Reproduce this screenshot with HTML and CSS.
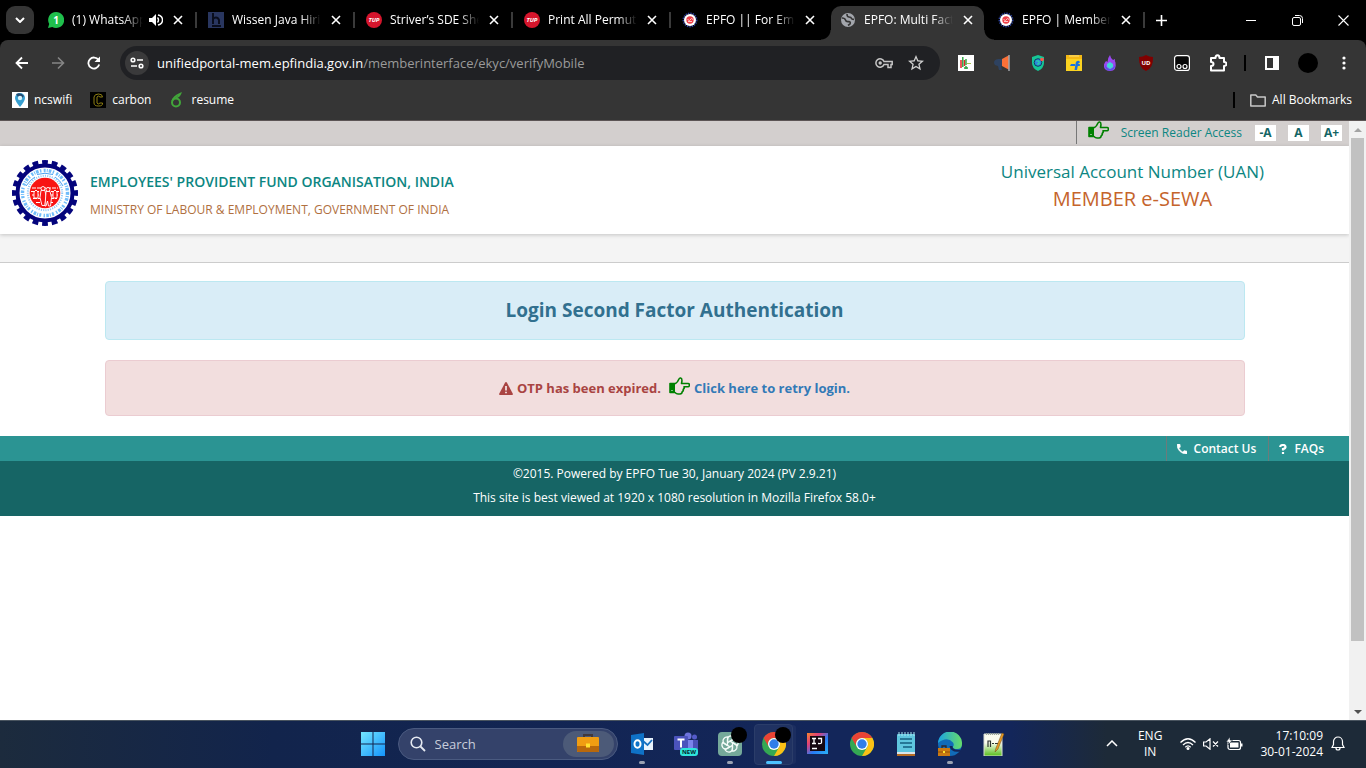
FILE: index.html
```html
<!DOCTYPE html>
<html lang="en">
<head>
<meta charset="utf-8">
<title>EPFO: Multi Factor Authentication</title>
<meta name="viewport" content="width=device-width, initial-scale=1">
<link rel="stylesheet" href="styles.css">
</head>
<body>
<svg class="defs" aria-hidden="true">
  <symbol id="x" viewBox="0 0 10 10"><path d="M1 1l8 8M9 1L1 9" fill="none" stroke="currentColor" stroke-width="1.6"/></symbol>
  <symbol id="epfo" viewBox="0 0 66 66">
    <circle cx="33" cy="33" r="30.5" fill="none" stroke="#04047c" stroke-width="5" pathLength="200" stroke-dasharray="6 4" stroke-dashoffset="3" transform="rotate(-90 33 33)"/>
    <circle cx="33" cy="33" r="27.5" fill="#fff" stroke="#04047c" stroke-width="4"/>
    <circle cx="33" cy="33" r="22.5" fill="none" stroke="#6fbcfa" stroke-width="3.4" stroke-dasharray="2 1.2 1 1 2.6 1.4 1.4 2.4"/>
    <path d="M14 26q5-7 9-9M43 17q5 3 8 9M25 14.500q8-2.500 16 0" fill="none" stroke="#4aa2f2" stroke-width="1"/>
    <circle cx="33" cy="33" r="17.200" fill="none" stroke="#8fc8f8" stroke-width="2" stroke-dasharray="1.100 1.200"/>
    <circle cx="33" cy="33" r="15.300" fill="#f81414"/>
    <path d="M20 28h26M19 31.500h8M39 31.500h8M20 35h7M39 35h7M21 38.500h7M38 38.500h7M24 42.500h5M37 42.500h5" fill="none" stroke="#fff" stroke-width="1.100" stroke-dasharray="4 1"/>
    <g fill="#f81414" stroke="#fff" stroke-width=".9">
      <path d="M29 30.500h4l1 6-1 9h-3l-2-8z"/>
      <path d="M34 31.500h4l1.500 6-1 8.500h-2l-1-5-1.500 5h-1z"/>
      <circle cx="31" cy="28.500" r="2"/><circle cx="36" cy="29.500" r="2"/>
      <path d="M22 32l2-2 2 2v6h-4zM41 32l2-2 2 2v6h-4z"/>
    </g>
  </symbol>
  <symbol id="epfo-small" viewBox="0 0 16 16">
    <circle cx="8" cy="8" r="6.6" fill="none" stroke="#2c419b" stroke-width="1.8" stroke-dasharray="1.4 1"/>
    <circle cx="8" cy="8" r="6" fill="#fff"/><circle cx="8" cy="8" r="3.7" fill="#ef4048"/>
    <path d="M5.5 7.5l2 1 2-2 1.5 1M6 9.5h4" stroke="#ffc4c4" fill="none"/>
  </symbol>
  <symbol id="hand" viewBox="0 0 21 18">
    <path d="M1 6.5h5v9H1z" fill="#008000"/>
    <path d="M1 6.5h5.500q2-1 3.200-4 .8-1.800 2-1.500 2 .5.8 5.500h6.500q1.600.2 1.500 1.700-.2 1.500-1.500 1.600H15q.8 1.300-.8 2.500.5 1.700-1 2.400 0 2-2.200 2.300H9q-1.600-.1-3-1.500H1z" fill="none" stroke="#008000" stroke-width="1.600" stroke-linejoin="round"/>
    <path d="M2.500 13.500h1" stroke="#fff" stroke-width="1"/>
  </symbol>
  <symbol id="chrome" viewBox="0 0 24 24">
    <circle cx="12" cy="12" r="12" fill="#34a853"/>
    <path d="M1.600 6A12 12 0 0 1 22.400 6H12a6 6 0 0 0-5.200 9z" fill="#ea4335"/>
    <path d="M22.400 6A12 12 0 0 1 12 24l5.200-9A6 6 0 0 0 17 8.700L12 6z" fill="#fbc116"/>
    <circle cx="12" cy="12" r="6" fill="#fff"/><circle cx="12" cy="12" r="4.700" fill="#2f7de9"/>
  </symbol>
</svg>

<header class="browser">
  <div class="tabs">
    <button class="tab-search" aria-label="Search tabs"><svg width="10" height="6" viewBox="0 0 10 6"><path d="M1 1l4 4 4-4" fill="none" stroke="#fff" stroke-width="2"/></svg></button>
    <div class="tab">
      <svg class="fav" viewBox="0 0 16 16"><path d="M8 0a8 8 0 1 1-3.700 15L0 16l1.200-4A8 8 0 0 1 8 0z" fill="#1fbf4c"/><text x="8" y="11.500" font-size="10" font-weight="700" text-anchor="middle" fill="#fff">1</text></svg>
      <button class="title">(1) WhatsApp</button>
      <svg class="sound" viewBox="0 0 14 12"><path d="M0 4h3l4-4v12L3 8H0z" fill="#fff"/><path d="M8.500 3.500q2 2.500 0 5M9 1q4.500 1 4.500 5T9 11" fill="none" stroke="#fff" stroke-width="1.400"/></svg>
      <button class="close" aria-label="Close tab"><svg><use href="#x"/></svg></button>
    </div>
    <div class="tab">
      <svg class="fav" viewBox="0 0 16 16"><path fill="#29365f" d="M0 0h16v16H0z"/><path d="M5 1v11M5 7q1-1.500 3-1.500T11 8v4M4 14h9" fill="none" stroke="#090d1c" stroke-width="2"/></svg>
      <button class="title">Wissen Java Hirin</button>
      <button class="close" aria-label="Close tab"><svg><use href="#x"/></svg></button>
    </div>
    <div class="tab">
      <svg class="fav" viewBox="0 0 16 16"><circle cx="8" cy="8" r="8" fill="#d5152c"/><text x="8" y="10.300" font-size="6" font-weight="700" font-style="italic" text-anchor="middle" fill="#fff">TUP</text></svg>
      <button class="title">Striver’s SDE She</button>
      <button class="close" aria-label="Close tab"><svg><use href="#x"/></svg></button>
    </div>
    <div class="tab">
      <svg class="fav" viewBox="0 0 16 16"><circle cx="8" cy="8" r="8" fill="#d5152c"/><text x="8" y="10.300" font-size="6" font-weight="700" font-style="italic" text-anchor="middle" fill="#fff">TUP</text></svg>
      <button class="title">Print All Permuta</button>
      <button class="close" aria-label="Close tab"><svg><use href="#x"/></svg></button>
    </div>
    <div class="tab before-active">
      <svg class="fav"><use href="#epfo-small"/></svg>
      <button class="title">EPFO || For Empl</button>
      <button class="close" aria-label="Close tab"><svg><use href="#x"/></svg></button>
    </div>
    <div class="tab active">
      <svg class="fav" viewBox="0 0 16 16"><circle cx="8" cy="8" r="7" fill="#a3a6ac"/><path d="M2 6q3 0 3.500 2T9 9.500q2 .5 1 2.500l-2 1.500M7 2q0 3 2 3t3 2l2 .5" fill="none" stroke="#353535" stroke-width="1.600"/></svg>
      <button class="title">EPFO: Multi Facto</button>
      <button class="close" aria-label="Close tab"><svg><use href="#x"/></svg></button>
    </div>
    <div class="tab">
      <svg class="fav"><use href="#epfo-small"/></svg>
      <button class="title">EPFO | Member</button>
      <button class="close" aria-label="Close tab"><svg><use href="#x"/></svg></button>
    </div>
    <button class="new-tab" aria-label="New tab"><svg width="11" height="11" viewBox="0 0 11 11"><path d="M5.500 0v11M0 5.500h11" stroke="#fff" stroke-width="1.600"/></svg></button>
    <div class="win">
      <button aria-label="Minimise"><svg width="10" height="10" viewBox="0 0 10 10"><path d="M0 5.500h10" stroke="#fff"/></svg></button>
      <button aria-label="Restore"><svg width="11" height="11" viewBox="0 0 11 11"><path d="M.5 4q0-1.500 1.500-1.500h5q1.500 0 1.500 1.500v5q0 1.500-1.500 1.500H2Q.5 10.500.5 9zM3 .5h4.500q3 0 3 3V8" fill="none" stroke="#fff"/></svg></button>
      <button aria-label="Close"><svg width="11" height="11" viewBox="0 0 11 11"><path d="M.5.5l10 10M10.500.5l-10 10" stroke="#fff" stroke-width="1.100"/></svg></button>
    </div>
  </div>

  <div class="toolbar">
    <button class="cell" aria-label="Back"><svg width="14" height="14" viewBox="0 0 14 14"><path d="M13 7H2M7 1.500L1.500 7 7 12.500" fill="none" stroke="#fff" stroke-width="1.800"/></svg></button>
    <button class="cell" aria-label="Forward"><svg width="14" height="14" viewBox="0 0 14 14"><path d="M1 7h11M7 1.500L12.500 7 7 12.500" fill="none" stroke="#858585" stroke-width="1.600"/></svg></button>
    <button class="cell" aria-label="Reload"><svg width="14" height="14" viewBox="0 0 14 14"><path d="M12.200 8.500A5.500 5.500 0 1 1 11.500 4" fill="none" stroke="#fff" stroke-width="1.800"/><path d="M13 .5V6H7.500z" fill="#fff"/></svg></button>
    <div class="omnibox">
      <button class="site" aria-label="Site information"><svg width="14" height="12" viewBox="0 0 14 12"><g fill="none" stroke="#fff" stroke-width="1.600"><circle cx="3" cy="3" r="1.800"/><path d="M7 3h6M1 9h6"/><circle cx="11" cy="9" r="1.800"/></g></svg></button>
      <a class="url" href="#"><b>unifiedportal-mem.epfindia.gov.in</b>/memberinterface/ekyc/verifyMobile</a>
      <button class="ob" aria-label="Passwords"><svg width="18" height="11" viewBox="0 0 18 11"><path d="M9 3.500h8.200v3H16v3h-3v-3H9a4.200 4.200 0 1 1 0-3z" fill="none" stroke="#c5c5c5" stroke-width="1.500"/><circle cx="5.200" cy="5" r="1.700" fill="#c5c5c5"/></svg></button>
      <button class="ob" aria-label="Bookmark this tab"><svg width="16" height="16" viewBox="2 2 20 20"><path fill="#d0d0d0" d="M22 9.240l-7.190-.62L12 2 9.190 8.630 2 9.240l5.460 4.730L5.820 21 12 17.270 18.180 21l-1.630-7.030zM12 15.400l-3.760 2.270 1-4.280-3.320-2.880 4.380-.38L12 6.100l1.710 4.040 4.380.38-3.320 2.880 1 4.280z"/></svg></button>
    </div>
    <button class="cell" aria-label="Trading"><svg viewBox="0 0 16 16"><path fill="#fff" d="M0 0h16v16H0z"/><path d="M3 5v8M6.500 5v6" stroke="#e32626" stroke-width="1.500"/><path d="M4.800 2v10M8 4v6M6 13h4M8 11v3" stroke="#2aa33c" stroke-width="1.400"/><path d="M9 8.500h4" stroke="#a5c44e"/></svg></button>
    <button class="cell" aria-label="Announcements"><svg viewBox="0 0 16 16"><path d="M8 4L14.500.5v14L8 11z" fill="#fa7038"/><path d="M8 4v7H7l1 4H5l-1-4Q0 10.500 0 7.500T4 4z" fill="#2e4260"/><path d="M15 0v16" stroke="#d8dce4"/></svg></button>
    <button class="cell" aria-label="Shield"><svg viewBox="0 0 16 16"><path d="M8 0l6 2v6q0 5-6 8-6-3-6-8V2z" fill="#16c696"/><circle cx="8" cy="7.500" r="3.800" fill="#2b87dc" stroke="#103f61"/><path d="M6 6h3v3H7" fill="none" stroke="#29e0a0"/><circle cx="12" cy="4.500" r="1.800" fill="#ff544a"/></svg></button>
    <button class="cell" aria-label="Flipkart"><svg viewBox="0 0 16 16"><path fill="#fbd321" d="M0 0h16v16H0z"/><path fill="#f5b915" d="M0 0h16v4H0z"/><path d="M3 1h10" stroke="#fbe079"/><path d="M13.500 6Q10 5 9.500 9l-1 6H11l.8-4h2v-2h-1.600q.2-1.300 1.500-1zM5 9h4v2H4z" fill="#1671e0"/></svg></button>
    <button class="cell" aria-label="Flame"><svg viewBox="0 0 16 16"><path d="M8 0q.5 3 3 5l2-1q-.5 2 .5 3.500Q15 16 8 16 1 16 2 9.500q.5-2 2-3.500l1.500 1Q5.500 3 8 0z" fill="#9a48f0"/><path d="M3 10q5 8 10 0 0 5-5 5.500T3 10z" fill="#5755e8"/><path d="M8 7l3 2v3l-3 2-3-2V9z" fill="#42d7d8"/></svg></button>
    <button class="cell" aria-label="uBlock"><svg viewBox="0 0 16 16"><path d="M8 0q3 2 7 2 .5 11-7 14Q.5 13 1 2q4 0 7-2z" fill="#800000"/><text x="8" y="9.800" font-size="6" font-weight="700" text-anchor="middle" fill="#fff">UD</text></svg></button>
    <button class="cell" aria-label="Tampermonkey"><svg viewBox="0 0 16 16"><rect x=".6" y=".6" width="14.800" height="14.800" rx="2.500" fill="#080808" stroke="#fff" stroke-width="1.200"/><g fill="none" stroke="#fff" stroke-width="1.200"><circle cx="5" cy="11.500" r="2"/><circle cx="11" cy="11.500" r="2"/></g></svg></button>
    <button class="cell" aria-label="Extensions"><svg width="18" height="18" viewBox="0 0 18 18"><path d="M2 4h4.500q0-2.700 2-2.700t2 2.700H15v4q2.500 0 2.500 2T15 12v4.500H2V12q2.500 0 2.500-2T2 8z" fill="none" stroke="#fff" stroke-width="2" stroke-linejoin="round"/></svg></button>
    <span class="divider"></span>
    <button class="cell" aria-label="Side panel"><svg width="14" height="14" viewBox="0 0 14 14"><rect x="1" y="1" width="12" height="12" fill="none" stroke="#fff" stroke-width="2"/><path fill="#fff" d="M8 1h5v12H8z"/></svg></button>
    <button class="cell" aria-label="Profile"><span class="avatar"></span></button>
    <button class="cell" aria-label="Menu"><svg viewBox="0 0 16 16"><g fill="#fff"><circle cx="8" cy="3" r="1.600"/><circle cx="8" cy="8" r="1.600"/><circle cx="8" cy="13" r="1.600"/></g></svg></button>
  </div>

  <nav class="bookmarks" aria-label="Bookmarks">
    <a href="#"><svg viewBox="0 0 16 16"><path fill="#fff" d="M0 0h16v16H0z"/><path d="M8 15Q3 9 3 6a5 5 0 0 1 10 0q0 3-5 9z" fill="#379fd0"/><path d="M4 2q5-2 8 2L8 8z" fill="#244b70"/><circle cx="8" cy="6" r="2.200" fill="#d9f3fb"/></svg>ncswifi</a>
    <a href="#"><svg viewBox="0 0 16 16"><path d="M0 0h16v16H0z"/><path d="M12.500 5q0-3-4-3T4 5v6q0 3 4.500 3t4-3h-2.500q-2 2-3 0V5q1-2 3 0z" fill="none" stroke="#8e7f12"/></svg>carbon</a>
    <a href="#"><svg viewBox="0 0 16 16"><circle cx="7" cy="10.500" r="4" fill="none" stroke="#42a63a" stroke-width="2"/><path d="M3.500 9Q4 4.500 11.500 1.500q-1 3-5 4.500" fill="none" stroke="#42a63a" stroke-width="1.700"/></svg>resume</a>
    <span class="divider push"></span>
    <a class="all" href="#"><svg viewBox="0 0 16 16"><path d="M.8 13V3h5l1.700 2h7.700v9H.8z" fill="none" stroke="#c7c7c7" stroke-width="1.500" stroke-linejoin="round"/></svg>All Bookmarks</a>
  </nav>
</header>

<div class="viewport">
  <main class="page">
    <div class="access">
      <div class="access-in">
        <svg class="hand"><use href="#hand"/></svg>
        <a href="#">Screen Reader Access</a>
        <button>-A</button><button>A</button><button>A+</button>
      </div>
    </div>
    <div class="masthead">
      <svg class="logo" role="img" aria-label="EPFO"><use href="#epfo"/></svg>
      <div class="org">
        <strong>EMPLOYEES' PROVIDENT FUND ORGANISATION, INDIA</strong>
        <span>MINISTRY OF LABOUR &amp; EMPLOYMENT, GOVERNMENT OF INDIA</span>
      </div>
      <div class="sewa">
        <span>Universal Account Number (UAN)</span>
        <strong>MEMBER e-SEWA</strong>
      </div>
    </div>
    <div class="strip"></div>
    <div class="container">
      <h1 class="alert info">Login Second Factor Authentication</h1>
      <p class="alert danger">
        <svg class="warn" viewBox="0 0 14 13"><path d="M7 0q.6 0 1 .7l5.800 11Q14.300 13 13 13H1q-1.300 0-.8-1.300L6 .7Q6.400 0 7 0z" fill="#a94442"/><path d="M7 4v4.500M7 9.700v1.600" stroke="#f2dede" stroke-width="1.800"/></svg>
        <span>OTP has been expired.</span>
        <svg class="hand"><use href="#hand"/></svg>
        <a href="#">Click here to retry login.</a>
      </p>
    </div>
    <footer>
      <div class="links">
        <a href="#"><svg viewBox="3 3 18 18"><path fill="#fff" stroke="#fff" d="M6.620 10.790c1.440 2.830 3.760 5.140 6.590 6.590l2.200-2.200c.27-.27.67-.36 1.020-.24 1.120.37 2.330.57 3.570.57.55 0 1 .45 1 1V20c0 .55-.45 1-1 1-9.390 0-17-7.610-17-17 0-.55.45-1 1-1h3.500c.55 0 1 .45 1 1 0 1.250.2 2.450.57 3.570.11.35.03.74-.25 1.020z"/></svg>Contact Us</a>
        <a href="#"><svg class="q" viewBox="0 0 8 10"><path d="M1 3Q1.500 1 4 1t2.500 2Q6.500 4.500 4 5v1.500M4 8v2" fill="none" stroke="#fff" stroke-width="2.200"/></svg>FAQs</a>
      </div>
      <div class="legal">
        <p>©2015. Powered by EPFO Tue 30, January 2024 (PV 2.9.21)</p>
        <p>This site is best viewed at 1920 x 1080 resolution in Mozilla Firefox 58.0+</p>
      </div>
    </footer>
  </main>
  <div class="scroll">
    <button aria-label="Scroll up"><svg width="8" height="4" viewBox="0 0 8 4"><path d="M0 4l4-4 4 4z" fill="#a3a3a3"/></svg></button>
    <div class="track"><div class="thumb"></div></div>
    <button aria-label="Scroll down"><svg width="8" height="4" viewBox="0 0 8 4"><path d="M0 0l4 4 4-4z" fill="#505050"/></svg></button>
  </div>
</div>

<div class="taskbar">
  <div class="apps">
    <button class="app" aria-label="Start"><svg viewBox="0 0 24 24"><defs><linearGradient id="w" x2="1" y2="1"><stop stop-color="#74e6ff"/><stop offset="1" stop-color="#1494fb"/></linearGradient></defs><path fill="url(#w)" d="M0 0h11.500v11.500H0zM12.500 0H24v11.500H12.500zM0 12.500h11.500V24H0zM12.500 12.500H24V24H12.500z"/></svg></button>
    <label class="search">
      <svg class="lens" viewBox="0 0 16 16"><circle cx="6.500" cy="6.500" r="5.300" fill="none" stroke="#e6eaf2" stroke-width="1.600"/><path d="M10.500 10.500L15 15" stroke="#e6eaf2" stroke-width="1.800"/></svg>
      <input type="search" placeholder="Search" aria-label="Search">
      <span class="highlight"><svg viewBox="0 0 24 19"><path d="M8 3V1h8v2" fill="none" stroke="#40383c" stroke-width="2"/><rect x="1" y="3" width="22" height="15" rx="1" fill="#f09d12"/><path fill="#b8680c" d="M1 12h22v5q0 1-1 1H2q-1 0-1-1z"/><path fill="#ffe12e" d="M10 9.500h4v4h-4z"/></svg></span>
    </label>
    <button class="app run" aria-label="Outlook"><svg viewBox="0 0 24 24"><path d="M12 6h11v12H12z" fill="#e9f3fc"/><path d="M13 9l4.500 4L22 8" fill="none" stroke="#1670c0" stroke-width="1.800"/><path d="M1 3l13-2v22L1 21z" fill="#0f72c7"/><ellipse cx="7.500" cy="12" rx="3" ry="3.800" fill="none" stroke="#fff" stroke-width="2"/></svg></button>
    <button class="app" aria-label="Teams"><svg viewBox="0 0 24 24"><circle cx="14" cy="4" r="3.500" fill="#6d73dd"/><circle cx="20.500" cy="5" r="2.500" fill="#545bc9"/><path d="M16 8h8v10h-8z" fill="#4a50b8"/><path d="M9 8h10v13H9z" fill="#7b83eb"/><rect y="4" width="14" height="14" rx="1" fill="#4b53bc"/><path d="M3.500 7.500h7M7 7.500v8" stroke="#fff" stroke-width="2"/><rect x="6" y="16" width="18" height="8" rx="3" fill="#2fe5dc"/><text x="15" y="22.300" font-size="6" font-weight="700" text-anchor="middle" fill="#06262c">NEW</text></svg></button>
    <button class="app run" aria-label="ChatGPT"><svg viewBox="0 0 24 24"><rect width="24" height="24" rx="4" fill="#75a99a"/><g fill="none" stroke="#f3fbf8" stroke-width="1.300"><path id="petal" d="M9.500 13.500V8q0-3.500 3-4 3-.3 4.500 2.300L12 9.200"/><use href="#petal" transform="rotate(60 12 12)"/><use href="#petal" transform="rotate(120 12 12)"/><use href="#petal" transform="rotate(180 12 12)"/><use href="#petal" transform="rotate(240 12 12)"/><use href="#petal" transform="rotate(300 12 12)"/></g></svg><span class="badge"></span></button>
    <button class="app current" aria-label="Chrome, profile 1"><svg><use href="#chrome"/></svg><span class="badge"></span></button>
    <button class="app" aria-label="IntelliJ IDEA"><svg viewBox="0 0 24 24"><defs><linearGradient id="ij" x2="1" y2="1"><stop stop-color="#f8862d"/><stop offset=".3" stop-color="#e03f78"/><stop offset=".6" stop-color="#277bf5"/><stop offset="1" stop-color="#2bb3f5"/></linearGradient></defs><path fill="url(#ij)" d="M1 1h21v21H1z"/><path fill="#150810" d="M4 4h15v15H4z"/><path d="M6 6.500h4M8 6.500v5M6 11.500h4M12 6.500h3.500v4q0 1.500-3.500 1M6 16.500h5" fill="none" stroke="#fff" stroke-width="1.300"/></svg></button>
    <button class="app" aria-label="Chrome, profile 2"><svg><use href="#chrome"/></svg></button>
    <button class="app" aria-label="Notepad"><svg viewBox="0 0 24 24"><rect x="3" y="2" width="18" height="21" rx="1" fill="#5fc6df"/><path fill="#d9e5ea" d="M3 20h18v2H3z"/><path fill="#b66c24" d="M3 22h18v2H3z"/><path d="M6 7h12M6 11h12M9 15h9" stroke="#155f80" stroke-width="1.600"/><path d="M5 0v4M8 0v4M11 0v4M14 0v4M17 0v4M20 0v4" stroke="#a9e6f2"/></svg></button>
    <button class="app run" aria-label="Edge"><svg viewBox="0 0 24 24"><defs><linearGradient id="e" x2="1"><stop stop-color="#1ba3e2"/><stop offset="1" stop-color="#66dc68"/></linearGradient></defs><circle cx="12" cy="12" r="12" fill="#116bb8"/><path d="M0 11a12 12 0 0 1 24 1q0 5-5 5-4.500 0-4-2.500 1.500-1.500 0-4Q9 4 0 11z" fill="url(#e)"/><path d="M14.500 14q-.5 4.500 8.500 3.500l-1 2Q13 21 11.500 14z" fill="#12265a"/><rect y="16" width="12" height="8" fill="#cc7a13"/><path d="M4 16v-2h4v2" fill="none" stroke="#30272a" stroke-width="1.300"/><path d="M0 20h12" stroke="#925006"/><path fill="#ffe12e" d="M5 19h2v2H5z"/></svg></button>
    <button class="app" aria-label="Notepad++"><svg viewBox="0 0 24 24"><defs><linearGradient id="n" x2="0" y2="1"><stop offset=".4" stop-color="#fbfcef"/><stop offset="1" stop-color="#53bd17"/></linearGradient></defs><path d="M2 2h18v22H2z" fill="url(#n)" stroke="#d7dbd2"/><path d="M6 15V9h2.500v6M10 11.500h2M13 11.500h3" fill="none" stroke="#303630" stroke-width="1.200"/><path d="M22 2l-6 15-3 3 1-4 6-15z" fill="#e89922" stroke="#6d4b17" stroke-width=".5"/><path d="M4 2h14" stroke="#9ca79c" stroke-width="2" stroke-dasharray="1 1"/></svg></button>
  </div>
  <div class="tray">
    <button aria-label="Hidden icons"><svg width="12" height="7" viewBox="0 0 12 7"><path d="M1 6l5-5 5 5" fill="none" stroke="#fff" stroke-width="1.500"/></svg></button>
    <button class="lang">ENG<br>IN</button>
    <button class="status" aria-label="Network, volume, battery">
      <svg width="16" height="12" viewBox="0 0 16 12"><g fill="none" stroke="#fff" stroke-width="1.300"><path d="M.5 4.500q7.500-7.500 15 0M3 7q5-5 10 0M5.300 9.200q2.700-2.700 5.400 0"/></g><circle cx="8" cy="10.500" r="1.500" fill="#fff"/></svg>
      <svg width="16" height="12" viewBox="0 0 16 12"><path d="M.6 4h2.500L7 .8v10.400L3.100 8H.6zM10 3.500l5 5M15 3.500l-5 5" fill="none" stroke="#fff" stroke-width="1.200"/></svg>
      <svg width="17" height="14" viewBox="0 0 17 14"><rect x="2" y="3.500" width="12.500" height="9" rx="2" fill="none" stroke="#fff" stroke-width="1.200"/><path d="M4 5.500h8.500v5H4zM15 6.500h1.500v3H15z" fill="#fff"/><path d="M4 0L0 5h2.500L2 8l4.500-5H4z" fill="#fff" stroke="#1d2a38" stroke-width=".6"/></svg>
    </button>
    <button class="clock">17:10:09<br>30-01-2024</button>
    <button aria-label="Notifications"><svg width="14" height="15" viewBox="0 0 14 15"><path d="M1 11.500l1.500-3V5.500a4.500 4.500 0 0 1 9 0v3l1.500 3zM5 12q0 2 2 2t2-2" fill="none" stroke="#fff" stroke-width="1.200"/></svg></button>
  </div>
</div>
</body>
</html>
```
FILE: styles.css
```css
* { box-sizing: border-box; }
body {
  margin: 0;
  height: 100vh;
  display: flex;
  flex-direction: column;
  overflow: hidden;
  background: #fff;
  font: 12px/16px "Open Sans", "Noto Sans", sans-serif;
}
button, input { font: inherit; color: inherit; }
button { margin: 0; padding: 0; border: 0; background: none; display: inline-flex; align-items: center; justify-content: center; }
a { color: inherit; text-decoration: none; }
p, h1 { margin: 0; }
svg { flex: none; display: block; }
.defs { position: absolute; width: 0; height: 0; }

/* Browser chrome */
.browser { background: #000; color: #fff; border-bottom: 1px solid #5c5555; }
.tabs { display: flex; align-items: center; height: 40px; padding-left: 6px; background: #000; }
.tab-search { width: 28px; height: 28px; margin-right: 4px; border-radius: 9px; background: #353535; }
.tab { position: relative; display: flex; align-items: center; width: 158px; height: 34px; margin-top: 6px; padding: 0 14px 6px 11px; }
.tab::after { content: ""; position: absolute; right: 0; top: 6px; width: 2px; height: 16px; background: #3a3a3a; }
.tab:nth-child(2) { width: 159px; padding-left: 10px; }
.tab.before-active::after { display: none; }
.fav { width: 16px; height: 16px; margin-right: 8px; }
.title { flex: 1; min-width: 0; justify-content: flex-start; overflow: hidden; white-space: nowrap; -webkit-mask-image: linear-gradient(90deg, #000 calc(100% - 20px), transparent); mask-image: linear-gradient(90deg, #000 calc(100% - 20px), transparent); }
.sound { width: 14px; height: 12px; margin-left: 6px; }
.close { width: 10px; height: 16px; margin-left: 10px; }
.close svg { width: 10px; height: 10px; }
.active::before { content: ""; position: absolute; inset: 0 3px 0 2px; border-radius: 10px 10px 0 0; background: #353535; }
.tab.active::after {
  inset: auto -7px 0 -8px;
  width: auto;
  height: 10px;
  background:
    radial-gradient(circle at 0 0, transparent 9px, #353535 10px) left / 10px 10px no-repeat,
    radial-gradient(circle at 100% 0, transparent 9px, #353535 10px) right / 10px 10px no-repeat;
}
.active > * { position: relative; }
.new-tab { width: 32px; height: 28px; }
.win { display: flex; margin-left: auto; }
.win button { width: 46px; height: 40px; }

.toolbar { display: flex; align-items: center; height: 46px; padding: 0 4px; border-radius: 8px 8px 0 0; background: #353535; }
.cell { width: 36px; height: 34px; }
.cell svg:not([width]) { width: 16px; height: 16px; }
.omnibox { flex: 1; display: flex; align-items: center; height: 34px; margin: 0 8px; padding: 0 8px 0 5px; border-radius: 17px; background: #202124; }
.site { width: 24px; height: 24px; margin-right: 8px; border-radius: 50%; background: #3a3a3b; }
.url { flex: 1; font-size: 13px; color: #9a9a9a; }
.url b { font-weight: 400; color: #fff; }
.ob { width: 32px; height: 32px; }
.divider { width: 2px; height: 16px; margin: 0 8px; background: #000; }
.avatar { width: 20px; height: 20px; border-radius: 50%; background: #000; }
.bookmarks { display: flex; align-items: center; gap: 18px; height: 34px; padding: 0 14px 6px 12px; background: #353535; }
.bookmarks a { display: flex; align-items: center; gap: 6px; }
.bookmarks svg { width: 16px; height: 16px; }
.bookmarks .push { margin: 0 -3px 0 auto; }

/* Page */
.viewport { flex: 1; min-height: 0; display: flex; }
.page { flex: 1; min-width: 0; overflow: hidden; }
.access { display: flex; justify-content: flex-end; height: 25px; padding-right: 7px; background: #d3cfce; color: #0c8682; }
.access-in { display: flex; align-items: center; height: 23px; padding-left: 11px; border-left: 1px solid #777; }
.hand { width: 21px; height: 18px; }
.access a { margin: 0 13px 0 12px; font-weight: 500; }
.access button { width: 21px; height: 16px; background: #fff; color: #146464; font-weight: 700; }
.access button + button { margin-left: 12px; }
.access .hand { margin-bottom: 6px; }
.masthead { position: relative; display: flex; align-items: center; height: 88px; padding: 0 85px 0 12px; box-shadow: 0 1px 4px rgba(0, 0, 0, .2); }
.logo { width: 66px; height: 66px; margin: 6px 12px 0 0; }
.org { display: grid; gap: 8px; padding-top: 12px; font-size: 14px; line-height: 20px; }
.org strong { font-weight: 600; color: #0c8682; }
.org span { font-size: 12px; color: #b0703f; }
.sewa { display: grid; margin-left: auto; padding-bottom: 11px; text-align: center; }
.sewa span { font-size: 17px; line-height: 27px; font-weight: 500; color: #0c8682; }
.sewa strong { font-size: 20px; line-height: 27px; font-weight: 500; color: #c5642c; }
.strip { height: 29px; background: #f4f4f4; border-bottom: 1px solid #ccc; }
.container { max-width: 1140px; margin: 18px auto 20px; display: grid; gap: 20px; }
.alert { display: flex; align-items: center; justify-content: center; border: 1px solid; border-radius: 4px; font-weight: 700; }
.info { padding: 15px; font-size: 19px; line-height: 27px; color: #31708f; background: #d9edf7; border-color: #bce8f1; }
.danger { padding: 16px 15px; gap: 4px; font-size: 13px; line-height: 20px; color: #a94442; background: #f2dede; border-color: #ebccd1; }
.danger a { color: #337ab7; }
.danger .hand { margin: 0 0 4px 4px; }
.warn { width: 14px; height: 13px; }
footer { color: #fff; background: #166565; }
.links { display: flex; justify-content: flex-end; height: 25px; padding-right: 13px; background: #2b9493; font-weight: 600; }
.links a { display: flex; align-items: center; gap: 7px; padding: 0 12px 0 10px; border-left: 1px solid #6c7b7b; }
.links svg { width: 10px; height: 10px; }
.links .q { width: 8px; }
.legal { padding: 1px 0 6px; text-align: center; line-height: 24px; }
.scroll { display: flex; flex-direction: column; align-items: center; width: 17px; background: #f1f1f1; }
.scroll button { width: 17px; height: 17px; }
.track { flex: 1; width: 13px; }
.thumb { height: 89%; background: #c1c1c1; }

/* Taskbar */
.taskbar { display: grid; grid-template-columns: 1fr auto 1fr; align-items: center; height: 48px; padding-bottom: 1px; color: #fff; background: linear-gradient(90deg, #1c2b3d 0, #12244c 20%, #13265a 60%, #13265a 74%, #1d2a38 81%); box-shadow: inset 0 1px #49545f; }
.apps { grid-column: 2; display: flex; align-items: center; }
.app { position: relative; width: 44px; height: 46px; }
.app > svg { width: 24px; height: 24px; }
.search { display: flex; align-items: center; width: 220px; height: 32px; margin: 0 2px 0 3px; padding: 0 3px 0 11px; border: 1px solid #4a5a80; border-radius: 16px; background: #34426a; }
.lens { width: 16px; height: 16px; margin-right: 9px; }
.search input { flex: 1; min-width: 0; padding: 0; border: 0; outline: 0; background: none; font-size: 13px; }
.search input::placeholder { color: #c8cddb; opacity: 1; }
.highlight { display: flex; justify-content: center; align-items: center; width: 51px; height: 26px; border-radius: 13px; background: #4c5a78; }
.highlight svg { width: 24px; height: 19px; }
.run::after, .current::after { content: ""; position: absolute; bottom: 3px; width: 6px; height: 3px; border-radius: 2px; background: #9aa2b3; }
.current::after { width: 16px; background: #4cc2ff; }
.current::before { content: ""; position: absolute; inset: 3px 3px 2px 2px; border: 1px solid #2b3d69; border-radius: 4px; background: #203262; box-shadow: 4px 0 0 -1px #1c2e60; }
.current svg { position: relative; }
.badge { position: absolute; right: 5px; top: 6px; width: 16px; height: 16px; border-radius: 50%; background: #000; }
.tray { display: flex; align-items: center; justify-content: flex-end; padding-right: 21px; }
.lang { margin: 0 18px 0 20px; }
.status { gap: 7px; }
.clock { margin: 0 8px 0 17px; }
.lang, .clock { display: block; text-align: center; }
.clock { text-align: right; }
```
